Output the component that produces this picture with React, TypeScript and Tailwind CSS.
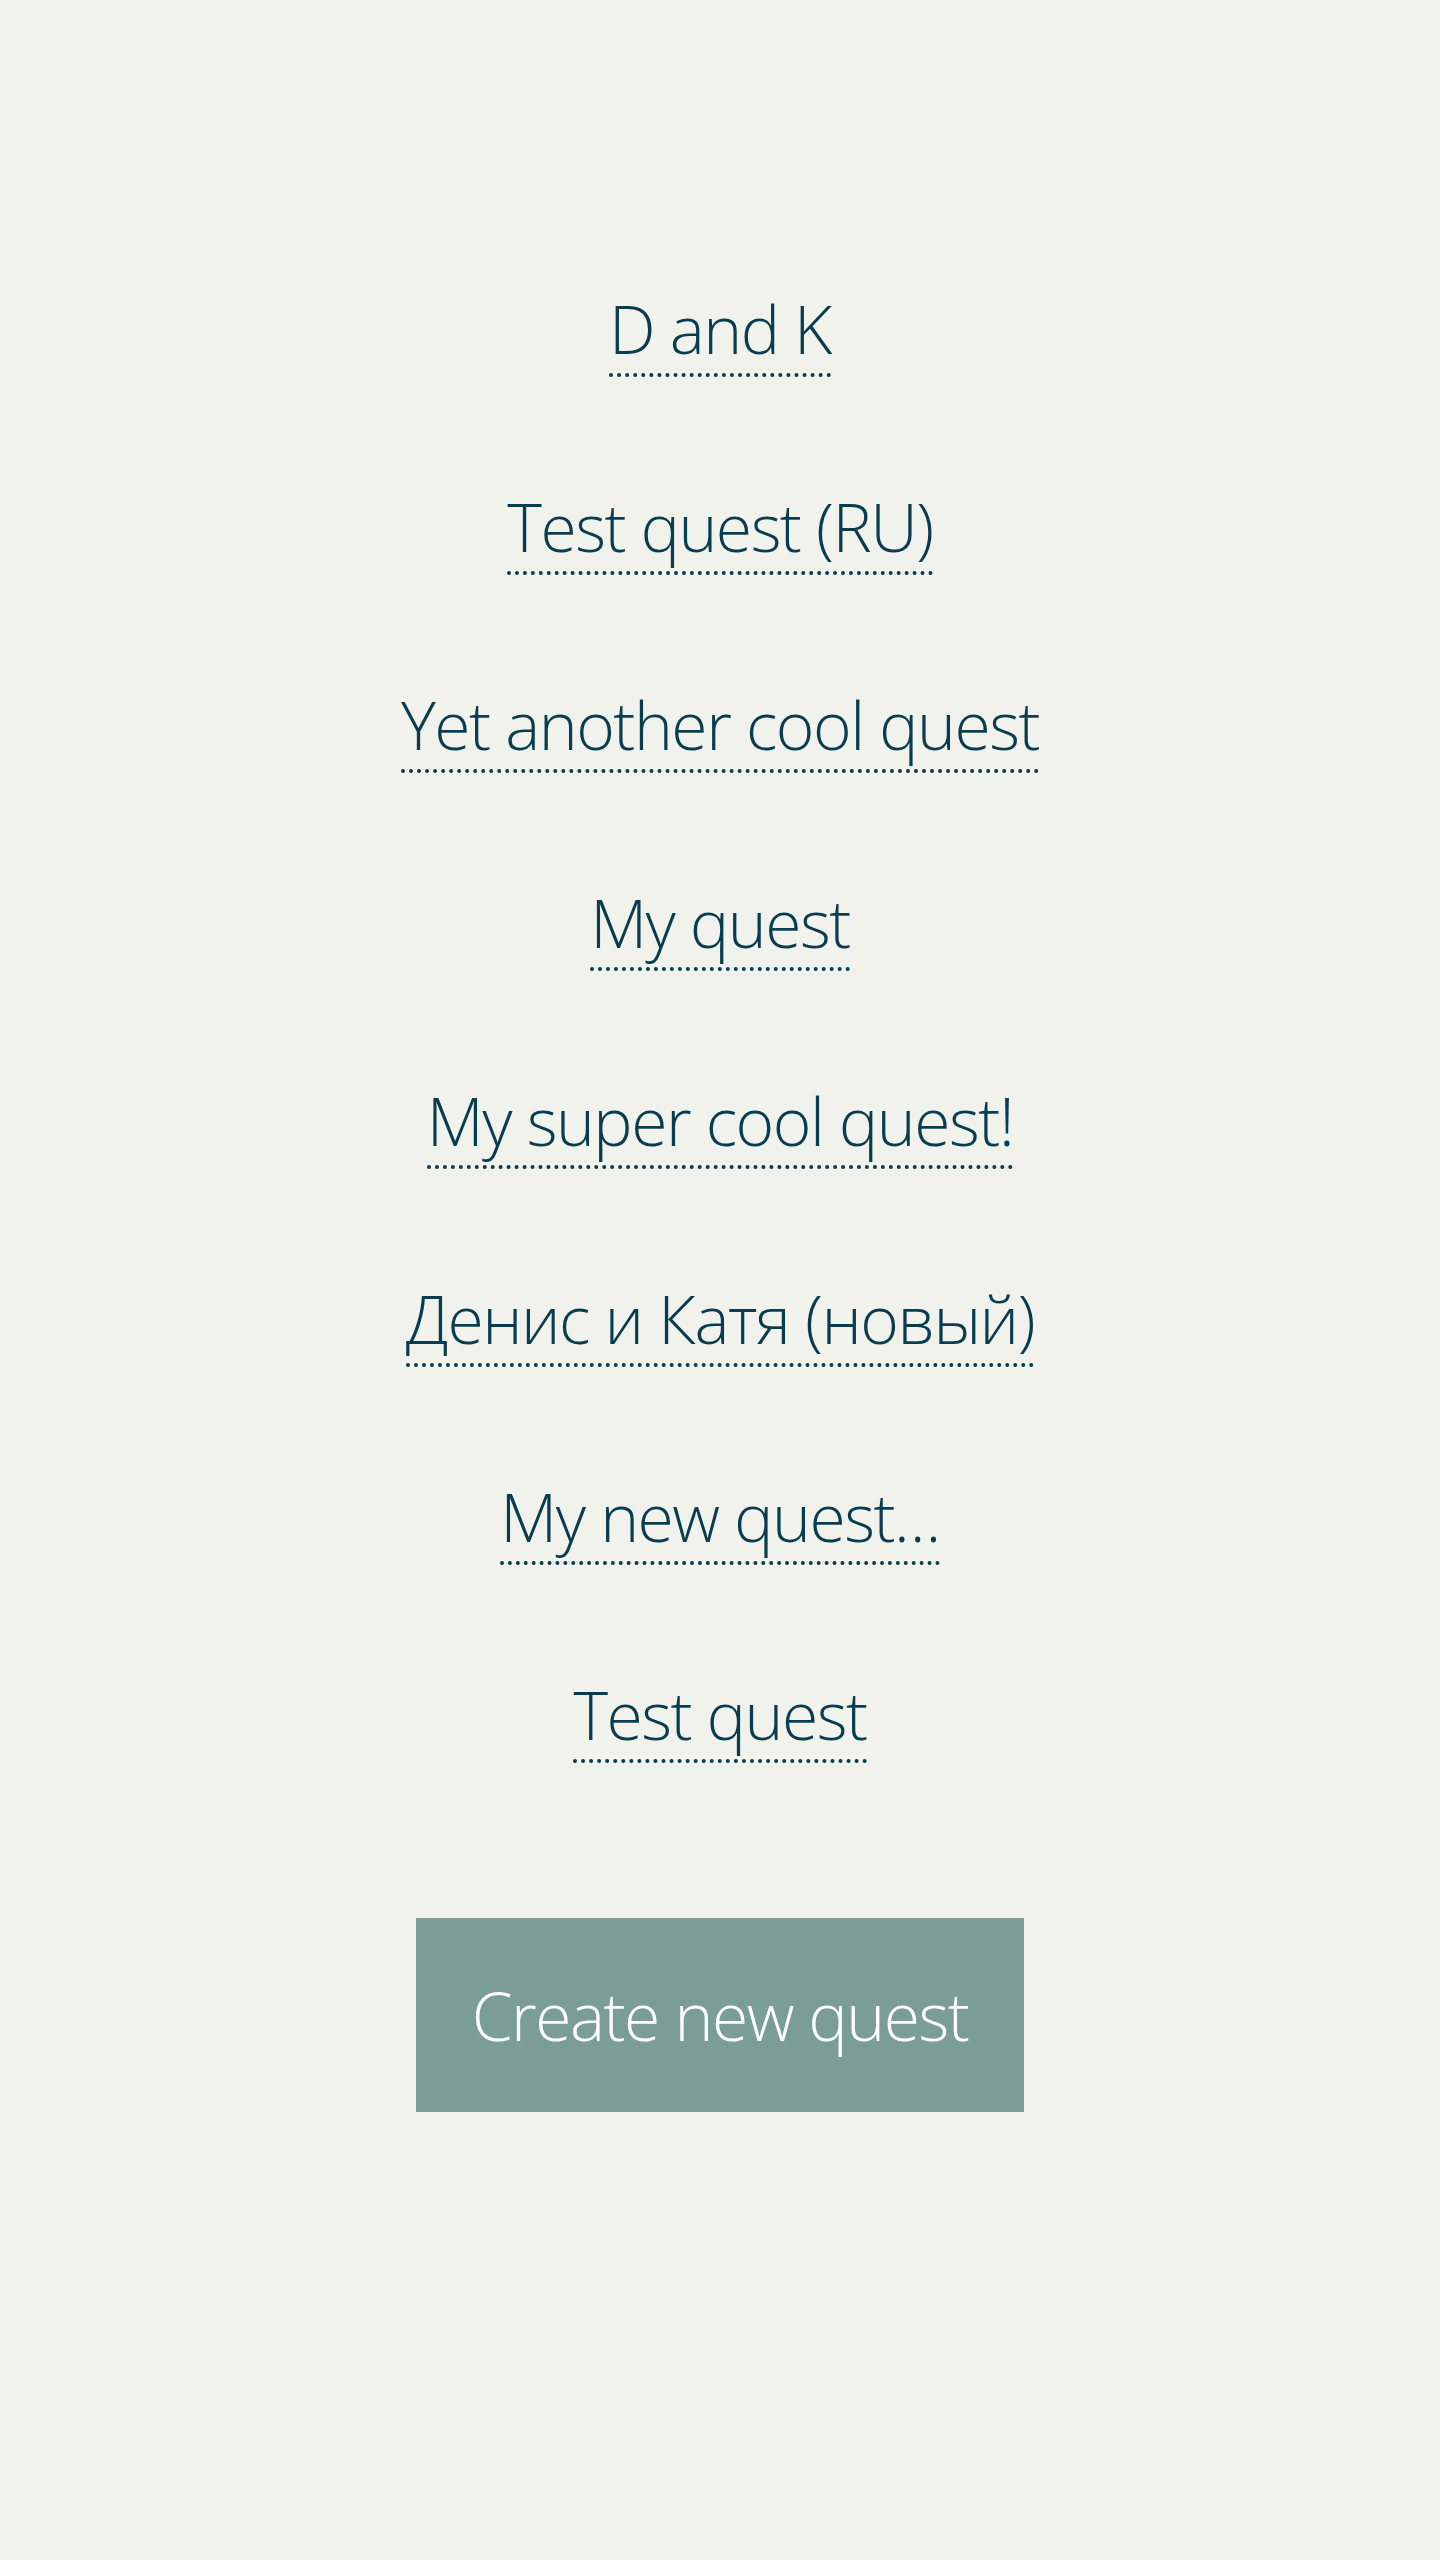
const quests = [
  "D and K",
  "Test quest (RU)",
  "Yet another cool quest",
  "My quest",
  "My super cool quest!",
  "Денис и Катя (новый)",
  "My new quest…",
  "Test quest",
];

export default function App() {
  return (
    <div className="min-h-[2560px] bg-[#f2f2ed] font-['Open_Sans',sans-serif] font-light tracking-[-1.5px]">
      <main className="flex flex-col items-center pt-[273px] pb-[200px]">
        {/* Quest list */}
        <ul className="flex flex-col items-center gap-[88px]">
          {quests.map((title) => (
            <li key={title} className="text-[66px] leading-[110px] text-[#083c4f]">
              <a href="#" className="border-b-4 border-dotted border-[#083c4f]">
                {title}
              </a>
            </li>
          ))}
        </ul>

        <button className="mt-[149px] w-[608px] py-[42px] bg-[#7a9e96] text-[66px] leading-[110px] text-white">
          Create new quest
        </button>
      </main>
    </div>
  );
}
